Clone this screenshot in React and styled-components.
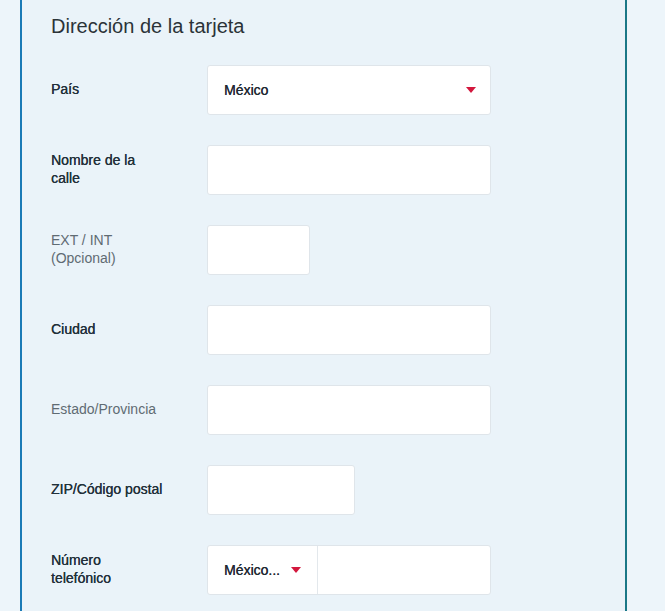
import React from "react";
import styled, { createGlobalStyle } from "styled-components";

const Global = createGlobalStyle`
  html, body { margin: 0; padding: 0; background: #edf5fa; }
  body { font-family: "Liberation Sans", Arial, sans-serif; overflow: hidden; }
`;

const Page = styled.div`
  width: 665px;
  height: 611px;
  padding-left: 20px;
  box-sizing: border-box;
  background: #edf5fa;
`;

const Card = styled.section`
  width: 607px;
  height: 611px;
  box-sizing: border-box;
  background: #eaf3f9;
  border-left: 2px solid #1a7ab6;
  border-right: 2px solid #1b7887;
  padding: 13px 0 0 29px;
`;

const Title = styled.h2`
  margin: 0 0 26px;
  font-size: 20px;
  font-weight: 400;
  line-height: 26px;
  color: #2b3338;
`;

const Form = styled.div`
  display: grid;
  grid-template-columns: 156px 284px;
  row-gap: 30px;
  align-items: center;
`;

const Label = styled.div`
  font-size: 14px;
  line-height: 18px;
  padding-bottom: 3px;
  color: ${(p) => (p.$optional ? "#5f6b73" : "#22303a")};
`;

const LabelText = styled.span`
  text-shadow: ${(p) => (p.$optional ? "none" : "0.2px 0 0 currentColor")};
`;

const Box = styled.div`
  width: ${(p) => p.$w || 284}px;
  height: 50px;
  box-sizing: border-box;
  background: #fff;
  border: 1px solid #dfe5ea;
  border-radius: 3px;
  display: flex;
  align-items: center;
  overflow: hidden;
`;

const SelectValue = styled.div`
  flex: ${(p) => (p.$fixed ? "0 0 110px" : "1")};
  height: 100%;
  display: flex;
  align-items: center;
  justify-content: space-between;
  padding: 0 ${(p) => (p.$fixed ? "16px" : "14px")} 0 16px;
  box-sizing: border-box;
  font-size: 14px;
  color: #1f2a33;
  text-shadow: 0.2px 0 0 currentColor;
  border-right: ${(p) => (p.$fixed ? "1px solid #e3e8ec" : "none")};
`;

const Arrow = styled.span`
  width: 0;
  height: 0;
  border-left: 5px solid transparent;
  border-right: 5px solid transparent;
  border-top: 6px solid #d3173d;
`;

const rows = [
  { label: ["País"], type: "select", value: "México" },
  { label: ["Nombre de la", "calle"] },
  { label: ["EXT / INT", "(Opcional)"], optional: true, w: 103 },
  { label: ["Ciudad"] },
  { label: ["Estado/Provincia"], optional: true },
  { label: ["ZIP/Código postal"], w: 148 },
  { label: ["Número", "telefónico"], type: "phone" },
];

export default function App() {
  return (
    <>
      <Global />
      <Page>
        <Card>
          <Title>Dirección de la tarjeta</Title>
          <Form>
            {rows.map((r, i) => (
              <React.Fragment key={i}>
                <Label $optional={r.optional}>
                  {r.label.map((l, j) => (
                    <React.Fragment key={j}>
                      {j > 0 && <br />}
                      <LabelText $optional={r.optional}>{l}</LabelText>
                    </React.Fragment>
                  ))}
                </Label>
                <Box $w={r.w}>
                  {r.type === "select" && (
                    <SelectValue>
                      {r.value}
                      <Arrow />
                    </SelectValue>
                  )}
                  {r.type === "phone" && (
                    <SelectValue $fixed>
                      México...
                      <Arrow />
                    </SelectValue>
                  )}
                </Box>
              </React.Fragment>
            ))}
          </Form>
        </Card>
      </Page>
    </>
  );
}
